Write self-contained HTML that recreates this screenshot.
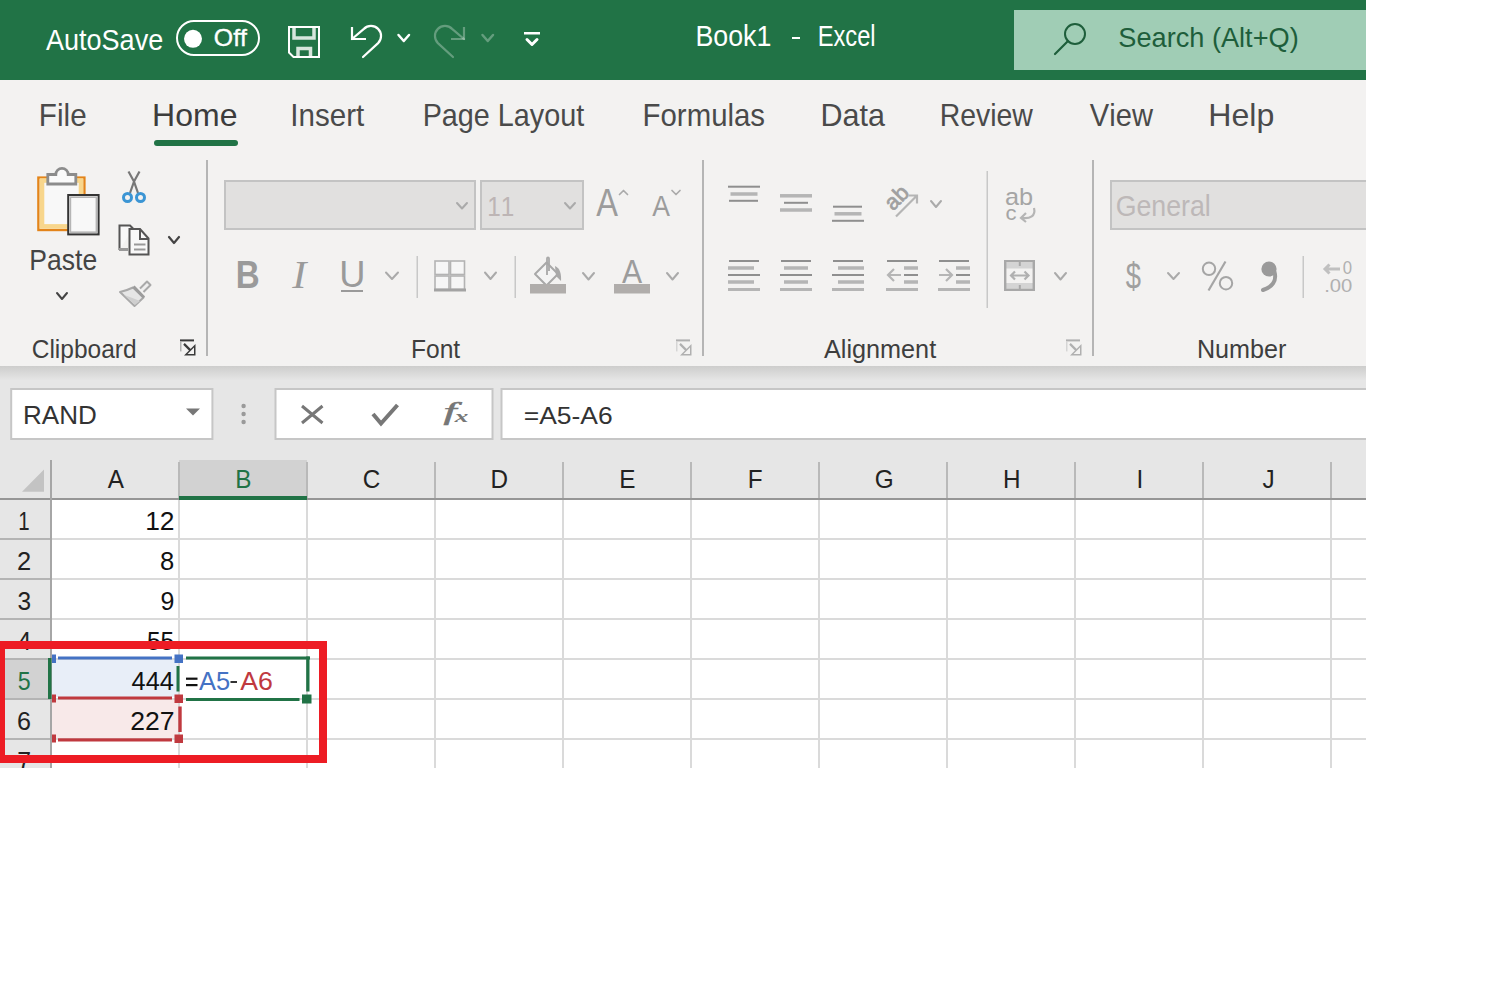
<!DOCTYPE html>
<html><head><meta charset="utf-8"><style>
html,body{margin:0;padding:0;background:#fff;}
svg{display:block;font-family:"Liberation Sans",sans-serif;font-kerning:none;}
</style></head><body>
<svg width="1500" height="1000" viewBox="0 0 1500 1000">
<rect x="0" y="0" width="1500" height="1000" fill="#fff"/>
<defs><clipPath id="scr"><rect x="0" y="0" width="1366" height="768"/></clipPath></defs>
<g clip-path="url(#scr)">
<rect x="0" y="0" width="1366" height="80" fill="#217346" />
<text x="45.95" y="50.00" font-size="29.07" fill="#fff" font-weight="normal" textLength="117.25" lengthAdjust="spacingAndGlyphs" >AutoSave</text>
<rect x="177" y="21" width="82" height="34" rx="17" fill="none" stroke="#fff" stroke-width="2"/>
<circle cx="193" cy="38.8" r="9" fill="#fff"/>
<text x="213.82" y="46.00" font-size="23.26" fill="#fff" font-weight="normal" textLength="33.14" lengthAdjust="spacingAndGlyphs" stroke="#fff" stroke-width="0.35">Off</text>
<path d="M289 27 H319 V57 H293.5 L289 52.5 Z" stroke="#fff" stroke-width="2" fill="none" />
<path d="M294 28 V38 H314 V28" stroke="rgba(255,255,255,0.82)" stroke-width="3.5" fill="none" />
<path d="M298 56 V48.5 H310.5 V56" stroke="rgba(255,255,255,0.82)" stroke-width="3.5" fill="none" />
<path d="M352 27 V39 H366" stroke="#fff" stroke-width="2.2" fill="none" />
<path d="M352 39 L363.9 28.9 A10 10 0 0 1 378.1 43.1 L363 57" stroke="#fff" stroke-width="2.2" fill="none" stroke-linecap="round"/>
<path d="M398.5 35 L403.75 41 L409 35" stroke="#fff" stroke-width="2.5" fill="none" stroke-linecap="round" stroke-linejoin="round"/>
<path d="M464 27 V39 H451" stroke="rgba(255,255,255,0.3)" stroke-width="2.2" fill="none" />
<path d="M464 39 L452.1 28.9 A10 10 0 0 0 437.9 43.1 L453 57" stroke="rgba(255,255,255,0.3)" stroke-width="2.2" fill="none" stroke-linecap="round"/>
<path d="M482.5 35 L487.75 41 L493 35" stroke="rgba(255,255,255,0.3)" stroke-width="2.5" fill="none" stroke-linecap="round" stroke-linejoin="round"/>
<rect x="524" y="32" width="16" height="2.5" fill="#fff" />
<path d="M527 39.5 L532.0 44.5 L537 39.5" stroke="#fff" stroke-width="3" fill="none" stroke-linecap="round" stroke-linejoin="round"/>
<text x="695.40" y="46.00" font-size="29.07" fill="#fff" font-weight="normal" textLength="75.90" lengthAdjust="spacingAndGlyphs" >Book1</text>
<rect x="792" y="37" width="8" height="2" fill="#fff" />
<text x="817.66" y="46.00" font-size="29.07" fill="#fff" font-weight="normal" textLength="57.93" lengthAdjust="spacingAndGlyphs" >Excel</text>
<rect x="1014" y="10" width="352" height="60" fill="#a0cdb5" />
<circle cx="1075" cy="34" r="10" fill="none" stroke="#1e5e3b" stroke-width="2"/>
<path d="M1068 41 L1055 54" stroke="#1e5e3b" stroke-width="2.2" fill="none" stroke-linecap="round"/>
<text x="1118.37" y="47.00" font-size="26.89" fill="#1e5e3b" font-weight="normal" textLength="180.32" lengthAdjust="spacingAndGlyphs" >Search (Alt+Q)</text>
<rect x="0" y="80" width="1366" height="286" fill="#f3f2f1" />
<text x="38.87" y="126.00" font-size="31.98" fill="#4a4a4a" font-weight="normal" textLength="47.75" lengthAdjust="spacingAndGlyphs" >File</text>
<text x="152.08" y="126.00" font-size="31.98" fill="#3c3c3c" font-weight="normal" textLength="85.35" lengthAdjust="spacingAndGlyphs" >Home</text>
<text x="290.27" y="126.00" font-size="31.98" fill="#4a4a4a" font-weight="normal" textLength="73.95" lengthAdjust="spacingAndGlyphs" >Insert</text>
<text x="422.64" y="126.00" font-size="31.98" fill="#4a4a4a" font-weight="normal" textLength="161.57" lengthAdjust="spacingAndGlyphs" >Page Layout</text>
<text x="642.59" y="126.00" font-size="31.98" fill="#4a4a4a" font-weight="normal" textLength="122.47" lengthAdjust="spacingAndGlyphs" >Formulas</text>
<text x="820.49" y="126.00" font-size="31.98" fill="#4a4a4a" font-weight="normal" textLength="64.51" lengthAdjust="spacingAndGlyphs" >Data</text>
<text x="939.67" y="126.00" font-size="31.98" fill="#4a4a4a" font-weight="normal" textLength="93.26" lengthAdjust="spacingAndGlyphs" >Review</text>
<text x="1089.87" y="126.00" font-size="31.98" fill="#4a4a4a" font-weight="normal" textLength="63.06" lengthAdjust="spacingAndGlyphs" >View</text>
<text x="1208.37" y="126.00" font-size="31.98" fill="#4a4a4a" font-weight="normal" textLength="65.98" lengthAdjust="spacingAndGlyphs" >Help</text>
<rect x="154" y="140" width="84" height="6" rx="3" fill="#217346"/>
<rect x="206" y="160" width="2" height="196" fill="#b5b5b5" />
<rect x="702" y="160" width="2" height="196" fill="#b5b5b5" />
<rect x="1092" y="160" width="2" height="196" fill="#b5b5b5" />
<text x="31.76" y="358.00" font-size="25.44" fill="#3e3e3e" font-weight="normal" textLength="104.82" lengthAdjust="spacingAndGlyphs" >Clipboard</text>
<text x="410.98" y="358.00" font-size="25.44" fill="#3e3e3e" font-weight="normal" textLength="49.20" lengthAdjust="spacingAndGlyphs" >Font</text>
<text x="823.95" y="358.00" font-size="25.44" fill="#3e3e3e" font-weight="normal" textLength="112.23" lengthAdjust="spacingAndGlyphs" >Alignment</text>
<text x="1196.94" y="358.00" font-size="25.44" fill="#3e3e3e" font-weight="normal" textLength="89.48" lengthAdjust="spacingAndGlyphs" >Number</text>
<rect x="180" y="339.4" width="14" height="2.0" fill="#3a3a3a" />
<rect x="180" y="341.4" width="1.5" height="10.0" fill="#b0b0b0" />
<path d="M184 343.9 L194 353.9" stroke="#3a3a3a" stroke-width="2.2" fill="none" />
<path d="M184 355.4 H195.5 V343.9 Z" stroke="none" stroke-width="2" fill="#3a3a3a" />
<path d="M187.5 353.9 H194 V347.4 Z" stroke="none" stroke-width="2" fill="#f3f2f1" />
<rect x="676" y="339.4" width="14" height="2.0" fill="#b0b0b0" />
<rect x="676" y="341.4" width="1.5" height="10.0" fill="#d5d5d5" />
<path d="M680 343.9 L690 353.9" stroke="#b0b0b0" stroke-width="2.2" fill="none" />
<path d="M680 355.4 H691.5 V343.9 Z" stroke="none" stroke-width="2" fill="#b0b0b0" />
<path d="M683.5 353.9 H690 V347.4 Z" stroke="none" stroke-width="2" fill="#f3f2f1" />
<rect x="1066" y="339.4" width="14" height="2.0" fill="#b0b0b0" />
<rect x="1066" y="341.4" width="1.5" height="10.0" fill="#d5d5d5" />
<path d="M1070 343.9 L1080 353.9" stroke="#b0b0b0" stroke-width="2.2" fill="none" />
<path d="M1070 355.4 H1081.5 V343.9 Z" stroke="none" stroke-width="2" fill="#b0b0b0" />
<path d="M1073.5 353.9 H1080 V347.4 Z" stroke="none" stroke-width="2" fill="#f3f2f1" />
<rect x="38.4" y="177.6" width="46" height="52.4" fill="#f8f8f8" stroke="#e3841a" stroke-width="2.4"/>
<rect x="42" y="180.5" width="39" height="45.9" fill="none" stroke="#f8d68c" stroke-width="4.6"/>
<path d="M47.8 184 V174.5 H55.8 A6.2 6.2 0 0 1 68.2 174.5 H75.8 V184 Z" stroke="#8c8c8c" stroke-width="2.8" fill="#fafafa" />
<rect x="68.2" y="195" width="30.4" height="39.4" fill="#f8f8f8" stroke="#333" stroke-width="2"/>
<rect x="70.4" y="197.2" width="26" height="35" fill="none" stroke="#b5b5b5" stroke-width="1.6"/>
<text x="29.32" y="270.00" font-size="28.63" fill="#444" font-weight="normal" textLength="67.86" lengthAdjust="spacingAndGlyphs" >Paste</text>
<path d="M57 293 L62.0 299 L67 293" stroke="#444" stroke-width="2" fill="none" stroke-linecap="round" stroke-linejoin="round"/>
<path d="M128.5 171.5 L134 181.5 L130 193 M139.5 171.5 L134 181.5 L138 193" stroke="#777" stroke-width="2.2" fill="none" />
<circle cx="127.5" cy="197.5" r="4" fill="none" stroke="#3b95d4" stroke-width="3"/>
<circle cx="140.5" cy="197.5" r="4" fill="none" stroke="#3b95d4" stroke-width="3"/>
<path d="M119.5 250 V225.5 H130 L133 228.5" stroke="#555" stroke-width="2" fill="#f8f8f8" />
<rect x="119" y="248" width="9" height="3" fill="#999" />
<path d="M129.5 254.5 V229 H140 L148.5 238.5 V254.5 Z" stroke="#555" stroke-width="2" fill="#f8f8f8" />
<path d="M140 229 V239 H148.5" stroke="#555" stroke-width="2" fill="none" />
<rect x="134" y="243.5" width="11.5" height="2.0" fill="#999" />
<rect x="134" y="248.5" width="11.5" height="2.0" fill="#999" />
<path d="M169 237 L174.0 243 L179 237" stroke="#444" stroke-width="2.2" fill="none" stroke-linecap="round" stroke-linejoin="round"/>
<path d="M133 287.5 C128 290 124 291 120 292 L134.5 306 L143.5 297.5 Z" stroke="#a9a9a9" stroke-width="2" fill="#e6e6e6" stroke-linejoin="round"/>
<path d="M124 295 C130 297 135 299 140 301 L135 305 Z" stroke="none" stroke-width="2" fill="#cfcfcf" />
<path d="M133.5 286.5 L144 297.5" stroke="#9c9c9c" stroke-width="3" fill="none" />
<path d="M140 288.5 L147 281.5 L150.5 285 L143.5 292" stroke="#a9a9a9" stroke-width="2" fill="#eee" stroke-linejoin="round"/>
<rect x="225" y="181" width="250" height="48" fill="#e1e0df" stroke="#c3c3c3" stroke-width="2"/>
<path d="M457 203 L462.0 208.5 L467 203" stroke="#aaa" stroke-width="2" fill="none" stroke-linecap="round" stroke-linejoin="round"/>
<rect x="481" y="181" width="102" height="48" fill="#e1e0df" stroke="#c3c3c3" stroke-width="2"/>
<text x="487.15" y="215.60" font-size="28.49" fill="#bdb5b5" font-weight="normal" textLength="27.04" lengthAdjust="spacingAndGlyphs" >11</text>
<path d="M565 203 L570.0 208.5 L575 203" stroke="#aaa" stroke-width="2" fill="none" stroke-linecap="round" stroke-linejoin="round"/>
<text x="596.34" y="215.60" font-size="38.37" fill="#9c9c9c" font-weight="normal" textLength="21.73" lengthAdjust="spacingAndGlyphs" >A</text>
<path d="M619.5 194.5 L623.5 190.5 L627.5 194.5" stroke="#aaa" stroke-width="1.7" fill="none" stroke-linecap="round" stroke-linejoin="round"/>
<text x="652.35" y="215.60" font-size="29.94" fill="#9c9c9c" font-weight="normal" textLength="17.70" lengthAdjust="spacingAndGlyphs" >A</text>
<path d="M672 190.5 L676.0 194.5 L680 190.5" stroke="#aaa" stroke-width="1.7" fill="none" stroke-linecap="round" stroke-linejoin="round"/>
<text x="235.78" y="288.00" font-size="39.24" fill="#9a9a9a" font-weight="bold" textLength="23.92" lengthAdjust="spacingAndGlyphs" >B</text>
<g transform="translate(0,0)">
<text x="292.17" y="288.00" font-size="39.24" fill="#9a9a9a" font-weight="normal" textLength="14.17" lengthAdjust="spacingAndGlyphs" font-style="italic" font-family="Liberation Serif">I</text>
</g>
<text x="339.20" y="287.00" font-size="37.79" fill="#9a9a9a" font-weight="normal" textLength="26.20" lengthAdjust="spacingAndGlyphs" >U</text>
<rect x="341" y="290" width="22" height="2" fill="#9a9a9a" />
<path d="M386 272.5 L392.0 279 L398 272.5" stroke="#aaa" stroke-width="2" fill="none" stroke-linecap="round" stroke-linejoin="round"/>
<rect x="416.5" y="256" width="1.5" height="42" fill="#c8c8c8" />
<rect x="435" y="261" width="14" height="13.5" fill="#f6f6f6" stroke="#b3b3b3" stroke-width="1.6"/>
<rect x="450.5" y="261" width="14" height="13.5" fill="#f6f6f6" stroke="#b3b3b3" stroke-width="1.6"/>
<rect x="435" y="276" width="14" height="13.5" fill="#f6f6f6" stroke="#b3b3b3" stroke-width="1.6"/>
<rect x="450.5" y="276" width="14" height="13.5" fill="#f6f6f6" stroke="#b3b3b3" stroke-width="1.6"/>
<rect x="434" y="288.5" width="32" height="3.0" fill="#a3a3a3" />
<path d="M485 272.5 L490.5 279 L496 272.5" stroke="#aaa" stroke-width="2" fill="none" stroke-linecap="round" stroke-linejoin="round"/>
<rect x="514.5" y="256" width="1.5" height="42" fill="#c8c8c8" />
<path d="M535 274 L546.5 262.5 L558 274 L546.5 285.5 Z" stroke="#a8a8a8" stroke-width="2" fill="#f4f4f4" stroke-linejoin="round"/>
<path d="M547 275 V258.5 C547 257 549 257 549 258.5 V271" stroke="#a8a8a8" stroke-width="1.8" fill="none" />
<path d="M555 266 C560 268 561.5 274 561 281 L556 276 Z" stroke="none" stroke-width="2" fill="#a8a8a8" />
<rect x="530" y="284" width="36" height="9.5" fill="#b0adab" />
<path d="M583 273 L588.5 279.5 L594 273" stroke="#aaa" stroke-width="2" fill="none" stroke-linecap="round" stroke-linejoin="round"/>
<text x="621.94" y="283.00" font-size="32.85" fill="#9c9c9c" font-weight="normal" textLength="20.12" lengthAdjust="spacingAndGlyphs" >A</text>
<rect x="614" y="284" width="36" height="9.5" fill="#b0adab" />
<path d="M667 273 L672.5 279.5 L678 273" stroke="#aaa" stroke-width="2" fill="none" stroke-linecap="round" stroke-linejoin="round"/>
<rect x="728" y="185.7" width="32" height="2.0" fill="#8f8f8f" />
<rect x="730.5" y="192.25" width="27.0" height="3.5" fill="#b5b5b5" />
<rect x="729" y="199.8" width="29" height="2.0" fill="#8f8f8f" />
<rect x="780" y="194.05" width="32" height="3.5" fill="#b5b5b5" />
<rect x="784" y="201.8" width="24" height="2.0" fill="#8f8f8f" />
<rect x="780" y="208.25" width="32" height="3.5" fill="#b5b5b5" />
<rect x="833" y="205.7" width="29" height="2.0" fill="#8f8f8f" />
<rect x="834.5" y="212.05" width="27.0" height="3.5" fill="#b5b5b5" />
<rect x="832" y="219.8" width="32" height="2.0" fill="#8f8f8f" />
<rect x="729" y="260.0" width="30" height="2.0" fill="#8f8f8f" />
<rect x="728" y="266.25" width="26" height="3.5" fill="#b5b5b5" />
<rect x="728" y="274.0" width="32" height="2.0" fill="#8f8f8f" />
<rect x="728" y="280.25" width="26" height="3.5" fill="#b5b5b5" />
<rect x="728" y="288.0" width="32" height="3.0" fill="#b5b5b5" />
<rect x="781" y="260.0" width="30" height="2.0" fill="#8f8f8f" />
<rect x="784" y="266.25" width="24" height="3.5" fill="#b5b5b5" />
<rect x="780" y="274.0" width="32" height="2.0" fill="#8f8f8f" />
<rect x="784" y="280.25" width="24" height="3.5" fill="#b5b5b5" />
<rect x="780" y="288.0" width="32" height="3.0" fill="#b5b5b5" />
<rect x="833" y="260.0" width="30" height="2.0" fill="#8f8f8f" />
<rect x="838" y="266.25" width="26" height="3.5" fill="#b5b5b5" />
<rect x="832" y="274.0" width="32" height="2.0" fill="#8f8f8f" />
<rect x="838" y="280.25" width="26" height="3.5" fill="#b5b5b5" />
<rect x="832" y="288.0" width="32" height="3.0" fill="#b5b5b5" />
<rect x="887" y="260.0" width="30" height="2.0" fill="#8f8f8f" />
<rect x="904" y="266.25" width="14" height="3.5" fill="#b5b5b5" />
<rect x="904" y="274.0" width="14" height="2.0" fill="#8f8f8f" />
<rect x="904" y="280.25" width="14" height="3.5" fill="#b5b5b5" />
<rect x="886" y="288.0" width="32" height="3.0" fill="#b5b5b5" />
<path d="M901 275 H888 M894 269 L888 275 L894 281" stroke="#b5b5b5" stroke-width="2.2" fill="none" />
<rect x="939" y="260.0" width="30" height="2.0" fill="#8f8f8f" />
<rect x="956" y="266.25" width="14" height="3.5" fill="#b5b5b5" />
<rect x="956" y="274.0" width="14" height="2.0" fill="#8f8f8f" />
<rect x="956" y="280.25" width="14" height="3.5" fill="#b5b5b5" />
<rect x="938" y="288.0" width="32" height="3.0" fill="#b5b5b5" />
<path d="M939 275 H952 M946 269 L952 275 L946 281" stroke="#b5b5b5" stroke-width="2.2" fill="none" />
<text x="0" y="0" font-size="22" fill="#a0a0a0" stroke="#a0a0a0" stroke-width="0.7" transform="translate(893 211.5) rotate(-45)">ab</text>
<path d="M896 216.5 L916.5 196 M908.5 195.5 H917 V203.5" stroke="#b5b5b5" stroke-width="2.2" fill="none" />
<path d="M931 201 L936.0 207 L941 201" stroke="#aaa" stroke-width="2" fill="none" stroke-linecap="round" stroke-linejoin="round"/>
<rect x="986.5" y="171" width="1.5" height="137" fill="#c8c8c8" />
<text x="1004.93" y="205.00" font-size="24.71" fill="#a5a5a5" font-weight="normal" textLength="28.14" lengthAdjust="spacingAndGlyphs" >ab</text>
<text x="1005.56" y="219.50" font-size="20.00" fill="#a5a5a5" font-weight="normal" textLength="11.02" lengthAdjust="spacingAndGlyphs" >c</text>
<path d="M1034 208 C1036 216 1030 219 1022 218 M1026 213 L1021 218 L1026 222" stroke="#b5b5b5" stroke-width="2.2" fill="none" />
<rect x="1006" y="263" width="27" height="5.5" fill="#d4d4d4" />
<rect x="1006" y="283" width="27" height="5.5" fill="#d4d4d4" />
<rect x="1005.2" y="261.2" width="28.6" height="28.6" fill="none" stroke="#a8a8a8" stroke-width="2.4"/>
<rect x="1018.8" y="262" width="2.0" height="4" fill="#a8a8a8" />
<rect x="1018.8" y="285" width="2.0" height="4" fill="#a8a8a8" />
<path d="M1011 275.5 H1028.5 M1015 271.5 L1011 275.5 L1015 279.5 M1024.5 271.5 L1028.5 275.5 L1024.5 279.5" stroke="#b0b0b0" stroke-width="2.2" fill="none" />
<path d="M1055 273 L1060.5 279.5 L1066 273" stroke="#aaa" stroke-width="2" fill="none" stroke-linecap="round" stroke-linejoin="round"/>
<rect x="1111" y="181" width="260" height="48" fill="#e1e0df" stroke="#c3c3c3" stroke-width="2"/>
<text x="1115.66" y="216.00" font-size="29.07" fill="#bdb8b8" font-weight="normal" textLength="95.13" lengthAdjust="spacingAndGlyphs" >General</text>
<text x="1125.71" y="288.50" font-size="37.06" fill="#a0a0a0" font-weight="normal" textLength="15.24" lengthAdjust="spacingAndGlyphs" >$</text>
<path d="M1168 273 L1173.5 279 L1179 273" stroke="#aaa" stroke-width="2" fill="none" stroke-linecap="round" stroke-linejoin="round"/>
<ellipse cx="1209" cy="268.8" rx="6.2" ry="6.2" fill="none" stroke="#a5a5a5" stroke-width="2"/>
<ellipse cx="1226" cy="283.2" rx="6.2" ry="6.2" fill="none" stroke="#a5a5a5" stroke-width="2"/>
<path d="M1225.5 261.5 L1208.5 290.5" stroke="#a5a5a5" stroke-width="2.2" fill="none" />
<circle cx="1269" cy="269" r="7.6" fill="#9a9a9a"/>
<path d="M1274.5 272 C1277 281 1272 287 1263 290" stroke="#9a9a9a" stroke-width="4" fill="none" stroke-linecap="round"/>
<rect x="1302.5" y="256" width="1.5" height="42" fill="#c8c8c8" />
<text x="1342.85" y="273.50" font-size="18.17" fill="#b0b0b0" font-weight="normal" textLength="9.31" lengthAdjust="spacingAndGlyphs" >0</text>
<text x="1324.15" y="291.50" font-size="18.17" fill="#b0b0b0" font-weight="normal" textLength="28.14" lengthAdjust="spacingAndGlyphs" >.00</text>
<path d="M1340 269 H1325 M1329.5 264.5 L1325 269 L1329.5 273.5" stroke="#c0c0c0" stroke-width="3" fill="none" />
<defs><linearGradient id="sh" x1="0" y1="0" x2="0" y2="1"><stop offset="0" stop-color="#cdcdcc"/><stop offset="1" stop-color="#e5e5e5"/></linearGradient></defs>
<rect x="0" y="366" width="1366" height="94" fill="#e6e6e6" />
<rect x="0" y="366" width="1366" height="14" fill="url(#sh)" />
<rect x="11.2" y="389" width="201.2" height="50" fill="#fff" stroke="#c6c6c6" stroke-width="2"/>
<text x="23.06" y="424.00" font-size="25.73" fill="#333" font-weight="normal" textLength="73.78" lengthAdjust="spacingAndGlyphs" >RAND</text>
<path d="M186 408.5 H200 L193 415.5 Z" stroke="none" stroke-width="2" fill="#777" />
<circle cx="243.6" cy="406" r="2.2" fill="#9a9a9a"/>
<circle cx="243.6" cy="414" r="2.2" fill="#9a9a9a"/>
<circle cx="243.6" cy="422" r="2.2" fill="#9a9a9a"/>
<rect x="275.5" y="389" width="217" height="50" fill="#fff" stroke="#c6c6c6" stroke-width="2"/>
<path d="M302 406 L322.5 423 M322.5 406 L302 423" stroke="#777" stroke-width="3" fill="none" />
<path d="M373 414 L381 423.5 L397.5 405" stroke="#777" stroke-width="4" fill="none" />
<text x="443.48" y="420.23" font-size="26.17" fill="#777" font-weight="normal" textLength="12.95" lengthAdjust="spacingAndGlyphs" font-style="italic" font-family="Liberation Serif" stroke="#777" stroke-width="0.6">f</text>
<text x="454.83" y="421.60" font-size="16.78" fill="#777" font-weight="bold" textLength="13.63" lengthAdjust="spacingAndGlyphs" font-style="italic" font-family="Liberation Serif">x</text>
<rect x="501.5" y="389" width="880" height="50" fill="#fff" stroke="#c6c6c6" stroke-width="2"/>
<text x="523.71" y="423.50" font-size="23.55" fill="#333" font-weight="normal" textLength="88.95" lengthAdjust="spacingAndGlyphs" >=A5-A6</text>
<rect x="0" y="460" width="1366" height="308" fill="#fff" />
<rect x="0" y="460" width="51" height="308" fill="#e6e6e6" />
<rect x="51" y="460" width="1315" height="38" fill="#e6e6e6" />
<rect x="179" y="460" width="128" height="38" fill="#d2d2d2" />
<rect x="0" y="659" width="51" height="40" fill="#d2d2d2" />
<rect x="178" y="498" width="2" height="270" fill="#dadada" />
<rect x="178" y="462" width="2" height="36" fill="#b9b9b9" />
<rect x="306" y="498" width="2" height="270" fill="#dadada" />
<rect x="306" y="462" width="2" height="36" fill="#b9b9b9" />
<rect x="434" y="498" width="2" height="270" fill="#dadada" />
<rect x="434" y="462" width="2" height="36" fill="#b9b9b9" />
<rect x="562" y="498" width="2" height="270" fill="#dadada" />
<rect x="562" y="462" width="2" height="36" fill="#b9b9b9" />
<rect x="690" y="498" width="2" height="270" fill="#dadada" />
<rect x="690" y="462" width="2" height="36" fill="#b9b9b9" />
<rect x="818" y="498" width="2" height="270" fill="#dadada" />
<rect x="818" y="462" width="2" height="36" fill="#b9b9b9" />
<rect x="946" y="498" width="2" height="270" fill="#dadada" />
<rect x="946" y="462" width="2" height="36" fill="#b9b9b9" />
<rect x="1074" y="498" width="2" height="270" fill="#dadada" />
<rect x="1074" y="462" width="2" height="36" fill="#b9b9b9" />
<rect x="1202" y="498" width="2" height="270" fill="#dadada" />
<rect x="1202" y="462" width="2" height="36" fill="#b9b9b9" />
<rect x="1330" y="498" width="2" height="270" fill="#dadada" />
<rect x="1330" y="462" width="2" height="36" fill="#b9b9b9" />
<rect x="51" y="538" width="1315" height="2" fill="#dadada" />
<rect x="0" y="538" width="51" height="2" fill="#b4b4b4" />
<rect x="51" y="578" width="1315" height="2" fill="#dadada" />
<rect x="0" y="578" width="51" height="2" fill="#b4b4b4" />
<rect x="51" y="618" width="1315" height="2" fill="#dadada" />
<rect x="0" y="618" width="51" height="2" fill="#b4b4b4" />
<rect x="51" y="658" width="1315" height="2" fill="#dadada" />
<rect x="0" y="658" width="51" height="2" fill="#b4b4b4" />
<rect x="51" y="698" width="1315" height="2" fill="#dadada" />
<rect x="0" y="698" width="51" height="2" fill="#b4b4b4" />
<rect x="51" y="738" width="1315" height="2" fill="#dadada" />
<rect x="0" y="738" width="51" height="2" fill="#b4b4b4" />
<rect x="0" y="498" width="1366" height="2" fill="#969696" />
<rect x="50" y="460" width="2" height="308" fill="#a6a6a6" />
<rect x="179" y="496" width="128" height="4" fill="#217346" />
<rect x="48" y="658" width="3.5" height="41" fill="#217346" />
<path d="M22 491.8 L44 491.8 L44 469.4 Z" fill="#c3c3c3"/>
<text x="107.70" y="487.80" font-size="25.58" fill="#222" font-weight="normal" textLength="16.21" lengthAdjust="spacingAndGlyphs" >A</text>
<text x="235.34" y="487.80" font-size="25.58" fill="#217346" font-weight="normal" textLength="16.21" lengthAdjust="spacingAndGlyphs" >B</text>
<text x="362.87" y="487.80" font-size="25.58" fill="#222" font-weight="normal" textLength="17.55" lengthAdjust="spacingAndGlyphs" >C</text>
<text x="490.61" y="487.80" font-size="25.58" fill="#222" font-weight="normal" textLength="17.55" lengthAdjust="spacingAndGlyphs" >D</text>
<text x="619.22" y="487.80" font-size="25.58" fill="#222" font-weight="normal" textLength="16.21" lengthAdjust="spacingAndGlyphs" >E</text>
<text x="747.87" y="487.80" font-size="25.58" fill="#222" font-weight="normal" textLength="14.84" lengthAdjust="spacingAndGlyphs" >F</text>
<text x="874.65" y="487.80" font-size="25.58" fill="#222" font-weight="normal" textLength="18.90" lengthAdjust="spacingAndGlyphs" >G</text>
<text x="1003.02" y="487.80" font-size="25.58" fill="#222" font-weight="normal" textLength="17.55" lengthAdjust="spacingAndGlyphs" >H</text>
<text x="1136.42" y="487.80" font-size="25.58" fill="#222" font-weight="normal" textLength="6.75" lengthAdjust="spacingAndGlyphs" >I</text>
<text x="1262.44" y="487.80" font-size="25.58" fill="#222" font-weight="normal" textLength="12.15" lengthAdjust="spacingAndGlyphs" >J</text>
<text x="18.25" y="530.20" font-size="26.16" fill="#222" font-weight="normal" textLength="11.35" lengthAdjust="spacingAndGlyphs" >1</text>
<text x="17.12" y="570.20" font-size="26.16" fill="#222" font-weight="normal" textLength="14.16" lengthAdjust="spacingAndGlyphs" >2</text>
<text x="17.47" y="610.20" font-size="26.16" fill="#222" font-weight="normal" textLength="13.61" lengthAdjust="spacingAndGlyphs" >3</text>
<text x="17.38" y="650.20" font-size="26.16" fill="#222" font-weight="normal" textLength="13.80" lengthAdjust="spacingAndGlyphs" >4</text>
<text x="17.77" y="690.20" font-size="26.16" fill="#217346" font-weight="normal" textLength="12.90" lengthAdjust="spacingAndGlyphs" >5</text>
<text x="17.12" y="730.20" font-size="26.16" fill="#222" font-weight="normal" textLength="13.98" lengthAdjust="spacingAndGlyphs" >6</text>
<text x="17.28" y="770.20" font-size="26.16" fill="#222" font-weight="normal" textLength="13.82" lengthAdjust="spacingAndGlyphs" >7</text>
<rect x="52" y="660" width="126" height="37" fill="#e8eef8" />
<rect x="52" y="700" width="126" height="38" fill="#f8e9e9" />
<text x="145.19" y="530.20" font-size="26.16" fill="#111" font-weight="normal" textLength="29.34" lengthAdjust="spacingAndGlyphs" >12</text>
<text x="160.09" y="570.20" font-size="26.16" fill="#111" font-weight="normal" textLength="14.22" lengthAdjust="spacingAndGlyphs" >8</text>
<text x="160.53" y="610.20" font-size="26.16" fill="#111" font-weight="normal" textLength="13.85" lengthAdjust="spacingAndGlyphs" >9</text>
<text x="147.02" y="650.20" font-size="26.16" fill="#111" font-weight="normal" textLength="27.21" lengthAdjust="spacingAndGlyphs" >55</text>
<text x="131.62" y="690.20" font-size="26.16" fill="#111" font-weight="normal" textLength="42.33" lengthAdjust="spacingAndGlyphs" >444</text>
<text x="130.27" y="730.20" font-size="26.16" fill="#111" font-weight="normal" textLength="44.27" lengthAdjust="spacingAndGlyphs" >227</text>
<rect x="186" y="677.6" width="11.5" height="2.199999999999932" fill="#111" />
<rect x="186" y="684" width="11.5" height="2.2000000000000455" fill="#111" />
<text x="198.95" y="690.00" font-size="26.16" fill="#4472c4" font-weight="normal" textLength="31.12" lengthAdjust="spacingAndGlyphs" >A5</text>
<rect x="230.5" y="681" width="6.5" height="2" fill="#333" />
<text x="240.15" y="690.00" font-size="26.16" fill="#c0393f" font-weight="normal" textLength="32.73" lengthAdjust="spacingAndGlyphs" >A6</text>
<rect x="58" y="656.5" width="114" height="3.0" fill="#4472c4" />
<rect x="52" y="654.5" width="4" height="8.5" fill="#4472c4" />
<rect x="174.5" y="654.5" width="8.5" height="8.5" fill="#4472c4" />
<rect x="58" y="696.5" width="114" height="3.0" fill="#c0393f" />
<rect x="52" y="694.5" width="4" height="8.0" fill="#c0393f" />
<rect x="174.5" y="694.5" width="8.5" height="8.5" fill="#c0393f" />
<rect x="58" y="738.3" width="114" height="3.2000000000000455" fill="#c0393f" />
<rect x="52" y="734.5" width="4" height="8.0" fill="#c0393f" />
<rect x="174.5" y="734.5" width="8.5" height="8.5" fill="#c0393f" />
<rect x="178.3" y="706.5" width="3.3999999999999773" height="25.5" fill="#c0393f" />
<rect x="186" y="656.5" width="124" height="3.0" fill="#217346" />
<rect x="306.2" y="656.5" width="3.3000000000000114" height="35.0" fill="#217346" />
<rect x="186" y="698" width="113.5" height="3" fill="#217346" />
<rect x="176.5" y="666" width="3.0" height="25.5" fill="#217346" />
<rect x="302" y="694.5" width="9.5" height="9.0" fill="#217346" />
<rect x="1" y="645" width="322" height="114" fill="none" stroke="#ed1c24" stroke-width="8"/>
</g>
</svg>
</body></html>
